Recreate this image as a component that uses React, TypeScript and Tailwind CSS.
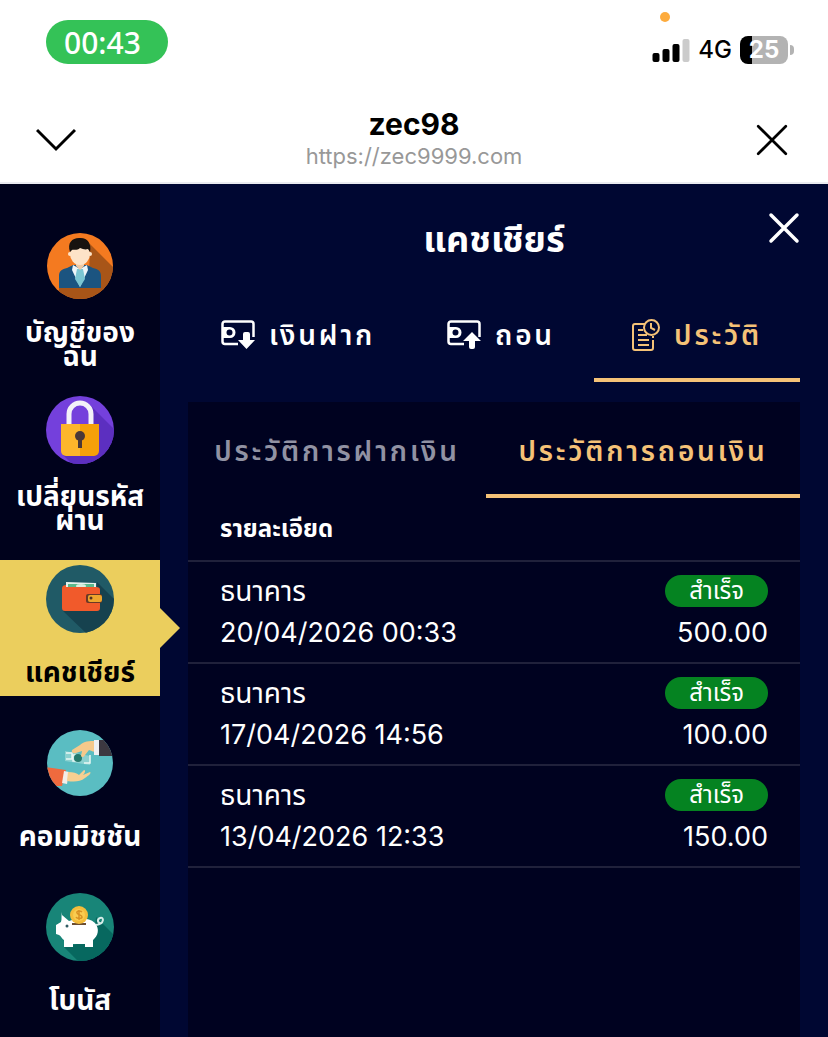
import type { ReactNode } from 'react'
import { clsx } from 'clsx'

const CIRCLE = 'size-17 shrink-0'

function AccountIcon() {
  return (
    <svg viewBox="0 0 68 68" className={CIRCLE} aria-hidden="true">
      <defs>
        <clipPath id="account-clip">
          <circle cx="34" cy="34" r="33" />
        </clipPath>
      </defs>
      <g clipPath="url(#account-clip)">
        <rect width="68" height="68" fill="#f47a20" />
        <path d="M44 12 68 36v32H13V56l30-10z" fill="#a85518" />
        <path d="M13 56V44c0-5 3-7 8-8l6-3h14l6 3c5 1 8 3 8 8v12z" fill="#1b5480" />
        <path d="m27 33 7 4 7-4 1 5-8 17-8-17z" fill="#eef5f8" />
        <path d="M31 37h6l2 10-5 8-5-8z" fill="#7cc6d2" />
        <path d="M30 28h8v6l-4 4-4-4z" fill="#efc9a4" />
        <ellipse cx="34" cy="22" rx="10" ry="11" fill="#fde3c8" />
        <circle cx="24" cy="22" r="2" fill="#fde3c8" />
        <circle cx="44" cy="22" r="2" fill="#fde3c8" />
        <path d="M24 20c-3-9 2-14 9-14 8-1 13 5 11 14l-2-3c-3 1-5 0-8-1-3 3-7 1-8 2z" fill="#17120f" />
      </g>
    </svg>
  )
}

function LockIcon() {
  return (
    <svg viewBox="0 0 68 68" className={CIRCLE} aria-hidden="true">
      <defs>
        <clipPath id="lock-clip">
          <circle cx="34" cy="34" r="34" />
        </clipPath>
      </defs>
      <g clipPath="url(#lock-clip)">
        <rect width="68" height="68" fill="#7440dc" />
        <path d="m44 9 24 24v35H26L16 58l30-30z" fill="#5c2fc0" />
        <path d="M23 29V18a11 11 0 0 1 22 0v11" fill="none" stroke="#f3f1f8" strokeWidth="5" />
        <path d="M15 28h19v32H20a5 5 0 0 1-5-5z" fill="#fdb62b" />
        <path d="M34 28h19v27a5 5 0 0 1-5 5H34z" fill="#f5a009" />
        <circle cx="34" cy="40" r="5" fill="#493838" />
        <path d="M32 42h4v10h-4z" fill="#493838" />
      </g>
    </svg>
  )
}

function WalletIcon() {
  return (
    <svg viewBox="0 0 68 68" className={CIRCLE} aria-hidden="true">
      <defs>
        <clipPath id="wallet-clip">
          <circle cx="34" cy="34" r="34" />
        </clipPath>
      </defs>
      <g clipPath="url(#wallet-clip)">
        <rect width="68" height="68" fill="#205a66" />
        <path d="M51 17 68 34v34H40L17 46l35-5z" fill="#16424f" />
        <path d="m20 17 30 1v10H20z" fill="#e5f2ed" />
        <path d="M22 19h26v5H22z" fill="#5bb98c" />
        <ellipse cx="35" cy="21" rx="5" ry="2" fill="#d9efdf" />
        <path d="M16 23c0-2 2-3 4-3v2h30c3 0 4 1 4 3v18c0 2-1 3-3 3H19c-2 0-3-1-3-3z" fill="#f15a2b" />
        <rect x="40" y="29" width="16" height="9" rx="2" fill="#6a3826" />
        <rect x="42" y="30" width="14" height="7" rx="2" fill="#eda52d" />
        <circle cx="45" cy="33" r="1.5" fill="#523323" />
      </g>
    </svg>
  )
}

function CommissionIcon() {
  return (
    <svg viewBox="0 0 68 68" className={CIRCLE} aria-hidden="true">
      <defs>
        <clipPath id="commission-clip">
          <circle cx="34" cy="34" r="33" />
        </clipPath>
      </defs>
      <g clipPath="url(#commission-clip)">
        <rect width="68" height="68" fill="#5abdc2" />
        <path d="m19 22 25 5v9l-25-4z" fill="#8bd1d0" />
        <path d="M20 24h6v6h-6m10-4h-3v6h5m12-6v8h-6" fill="none" stroke="#e9f7f4" strokeWidth="1.5" />
        <circle cx="32" cy="29" r="4" fill="#257a6c" />
        <path d="M50 12c-7 0-12 0-16 4l-8 5c-1 2 1 4 4 3l6-2-1 5c1 2 3 1 4-1l4-5c3 1 5 2 7 2z" fill="#f5c98b" />
        <path d="M48 11h6v15h-6z" fill="#eef0f3" />
        <path d="M53 11h15v16H53z" fill="#3c3840" />
        <path d="m0 38 20 3-4 16H0z" fill="#ef6a3e" />
        <path d="m18 42 5 1-2 12-5-1z" fill="#f3eee9" />
        <path d="M22 43c5 0 9 1 11 3l5-5c2 0 1 3-1 5l7-3c2 1-2 4-5 6-5 4-11 4-18 3z" fill="#f8cf91" />
      </g>
    </svg>
  )
}

function BonusIcon() {
  return (
    <svg viewBox="0 0 68 68" className={CIRCLE} aria-hidden="true">
      <defs>
        <clipPath id="bonus-clip">
          <circle cx="34" cy="34" r="34" />
        </clipPath>
      </defs>
      <g clipPath="url(#bonus-clip)">
        <rect width="68" height="68" fill="#188578" />
        <path d="m50 24 18 18v26H32L18 54l30-7z" fill="#07685f" />
        <path d="M16 22l7 6c9-3 19-4 26 2 5 6 3 13-2 17v7h-8v-3H27v3h-9v-7c-2-1-3-4-5-5l-3-1v-9l5-3c1-3 0-6 1-10z" fill="#fff" />
        <path d="M50 32c9-1 8-9 4-7-3 1-3 6 2 5" fill="none" stroke="#d5ece8" strokeWidth="2" />
        <circle cx="21" cy="33" r="1.5" fill="#305b64" />
        <path d="M26 31h14" stroke="#6b4d31" strokeWidth="2" />
        <circle cx="33" cy="22" r="9" fill="#f4bd3b" />
        <circle cx="33" cy="22" r="6" fill="#f9cc50" />
        <path d="M36 19c-2-2-6-1-5 1s5 2 5 4-5 2-6 0m3-7v10" fill="none" stroke="#d89224" strokeWidth="1.5" />
      </g>
    </svg>
  )
}

function CardIcon({ direction }: { direction: 'down' | 'up' }) {
  return (
    <svg viewBox="0 0 34 30" className="h-7.5 w-8.5 shrink-0" aria-hidden="true">
      <path
        d="M17 24H4a2.500 2.500 0 0 1-2.500-2.500V4A2.500 2.500 0 0 1 4 1.500h26A2.500 2.500 0 0 1 32.500 4v13"
        fill="none"
        stroke="currentColor"
        strokeWidth="2.500"
      />
      <path
        d="M2 7h7a5.500 5.500 0 0 1 0 11H2zM8.500 9.500a3 3 0 1 0 0 6 3 3 0 0 0 0-6z"
        fill="currentColor"
        fillRule="evenodd"
      />
      {direction === 'down' ? (
        <path d="M22 14q0-2 2-2h3q2 0 2 2v6h5l-8.500 9L17 20h5z" fill="currentColor" />
      ) : (
        <path d="M22 27q0 2 2 2h2q2 0 2-2v-6h6l-9-9-9 9h6z" fill="currentColor" />
      )}
    </svg>
  )
}

function HistoryIcon() {
  return (
    <svg viewBox="0 0 28 34" className="h-8.5 w-7 shrink-0" fill="none" stroke="currentColor" strokeWidth="2" aria-hidden="true">
      <path d="M13 6H3a2 2 0 0 0-2 2v22a2 2 0 0 0 2 2h16a2 2 0 0 0 2-2V22m0-4v2M6 12h5m-5 5h9m-9 5h11M6 27h11" />
      <circle cx="19.500" cy="9.500" r="7.500" />
      <path d="M19 5v5l4 2" />
    </svg>
  )
}

function CrossIcon({ className, width }: { className: string; width: number }) {
  return (
    <svg viewBox="0 0 32 32" className={className} fill="none" stroke="currentColor" strokeWidth={width} strokeLinecap="round" aria-hidden="true">
      <path d="m3 3 26 26M29 3 3 29" />
    </svg>
  )
}

const menu = [
  { label: ['บัญชีของ', 'ฉัน'], icon: <AccountIcon /> },
  { label: ['เปลี่ยนรหัส', 'ผ่าน'], icon: <LockIcon /> },
  { label: ['แคชเชียร์'], icon: <WalletIcon />, active: true },
  { label: ['คอมมิชชัน'], icon: <CommissionIcon /> },
  { label: ['โบนัส'], icon: <BonusIcon /> },
]

const withdrawals = [
  { date: '20/04/2026 00:33', amount: '500.00' },
  { date: '17/04/2026 14:56', amount: '100.00' },
  { date: '13/04/2026 12:33', amount: '150.00' },
]

function StatusBar() {
  return (
    <div className="flex h-23 items-start justify-between pt-5 pr-8.5 pl-11.5">
      <div className="flex h-11 w-30.5 items-center rounded-full bg-[#34c257] pl-4.5 font-['Noto_Sans'] text-[30px] font-medium text-white">
        00:43
      </div>
      <div className="relative mt-4 flex h-7 items-center gap-2">
        <span className="absolute -top-6 left-2 size-2.5 rounded-full bg-[#fdab3d]" />
        <svg viewBox="0 0 37 24" className="h-6 w-9.5" aria-hidden="true">
          <rect y="15" width="7" height="9" rx="2" />
          <rect x="10" y="11" width="7" height="13" rx="2" />
          <rect x="20" y="6" width="7" height="18" rx="2" />
          <rect x="30" y="1" width="7" height="23" rx="2" fill="#cbcbcb" />
        </svg>
        <span className="text-2xl font-medium">4G</span>
        <span className="flex items-center gap-0.5">
          <span className="flex h-7 w-12 items-center justify-center rounded-lg bg-linear-to-r from-black from-25% to-[#b3b3b3] to-25% text-2xl font-bold text-white">
            25
          </span>
          <span className="h-2.5 w-1 rounded-r-full bg-[#b3b3b3]" />
        </span>
      </div>
    </div>
  )
}

function BrowserHeader() {
  return (
    <header className="flex h-23 items-start justify-between border-b-2 border-[#ebebf0] px-9">
      <button type="button" aria-label="ย่อหน้าต่าง" className="mt-8">
        <svg viewBox="0 0 40 32" className="h-8 w-10" fill="none" stroke="currentColor" strokeWidth="3" aria-hidden="true">
          <path d="m1 6 19 19L39 6" />
        </svg>
      </button>
      <div className="pt-3.5 text-center">
        <h1 className="text-[30px] leading-9 font-bold">zec98</h1>
        <p className="text-[22px] leading-7 text-[#989898]">https://zec9999.com</p>
      </div>
      <button type="button" aria-label="ปิดหน้าต่าง" className="mt-7.5 flex h-9 w-10 items-center justify-center">
        <CrossIcon className="size-8.5" width={2.5} />
      </button>
    </header>
  )
}

function Sidebar() {
  return (
    <nav className="flex w-40 shrink-0 flex-col gap-7 bg-[#00021c] pt-12" aria-label="เมนู">
      {menu.map(({ label, icon, active }) => (
        <button
          key={label[0]}
          type="button"
          aria-current={active ? 'page' : undefined}
          className={clsx(
            'relative flex min-h-34 flex-col items-center justify-between text-[28px] leading-6 font-bold',
            label.length === 1 && 'pt-[5px]',
            active ? 'bg-[#ebce5d] text-black' : 'text-white',
          )}
        >
          {icon}
          <span className="flex min-h-12 flex-col justify-center">
            {label.map((line) => (
              <span key={line} className="block whitespace-nowrap">
                {line}
              </span>
            ))}
          </span>
          {active && (
            <svg viewBox="0 0 20 40" className="absolute top-12 left-full h-10 w-5" aria-hidden="true">
              <path d="m0 0 20 20L0 40z" fill="#ebce5d" />
            </svg>
          )}
        </button>
      ))}
    </nav>
  )
}

function Tab({ icon, active, children }: { icon?: ReactNode; active?: boolean; children: ReactNode }) {
  return (
    <button
      type="button"
      role="tab"
      aria-selected={!!active}
      className={clsx(
        'flex h-24 items-center justify-center gap-3.5 border-b-4 pt-1.5 text-[28px] font-semibold tracking-widest whitespace-nowrap',
        active && 'border-[#f5c277] text-[#f5c277]',
        !active && 'border-transparent',
        !active && !icon && 'text-[#9192a3]',
      )}
    >
      {icon}
      {children}
    </button>
  )
}

function HistoryTable() {
  return (
    <table className="w-full border-separate border-spacing-0 text-[28px]">
      <thead>
        <tr>
          <th className="h-16 border-b-2 border-[#20213b] px-8 text-left text-2xl font-bold">รายละเอียด</th>
        </tr>
      </thead>
      <tbody>
        {withdrawals.map(({ date, amount }) => (
          <tr key={date}>
            <td className="border-b-2 border-[#20213b] px-8 py-2 leading-[42px]">
              <div className="flex items-center justify-between">
                <span>ธนาคาร</span>
                <span className="flex h-8 items-center rounded-full bg-[#058321] px-6 text-2xl">สำเร็จ</span>
              </div>
              <div className="flex justify-between text-[27px]">
                <span>{date}</span>
                <span>{amount}</span>
              </div>
            </td>
          </tr>
        ))}
      </tbody>
    </table>
  )
}

export default function App() {
  return (
    <div className="flex min-h-screen flex-col bg-white font-['Inter','Noto_Sans_Thai','Noto_Sans',sans-serif] text-black">
      <StatusBar />
      <BrowserHeader />

      <div className="flex grow bg-[#000732] text-white">
        <Sidebar />

        <main className="flex min-w-0 grow flex-col px-7">
          {/* Title */}
          <div className="relative flex h-25.5 items-center justify-center pt-2">
            <h2 className="text-4xl font-bold">แคชเชียร์</h2>
            <button type="button" aria-label="ปิด" className="absolute top-7 right-0">
              <CrossIcon className="size-8" width={3.5} />
            </button>
          </div>

          {/* Cashier tabs */}
          <div className="grid grid-cols-[220fr_186fr_206fr]" role="tablist">
            <Tab icon={<CardIcon direction="down" />}>เงินฝาก</Tab>
            <Tab icon={<CardIcon direction="up" />}>ถอน</Tab>
            <Tab icon={<HistoryIcon />} active>
              ประวัติ
            </Tab>
          </div>

          {/* History */}
          <section className="mt-5 grow bg-[#000220]">
            <div className="grid grid-cols-[298fr_314fr]" role="tablist">
              <Tab>ประวัติการฝากเงิน</Tab>
              <Tab active>ประวัติการถอนเงิน</Tab>
            </div>
            <HistoryTable />
          </section>
        </main>
      </div>
    </div>
  )
}
